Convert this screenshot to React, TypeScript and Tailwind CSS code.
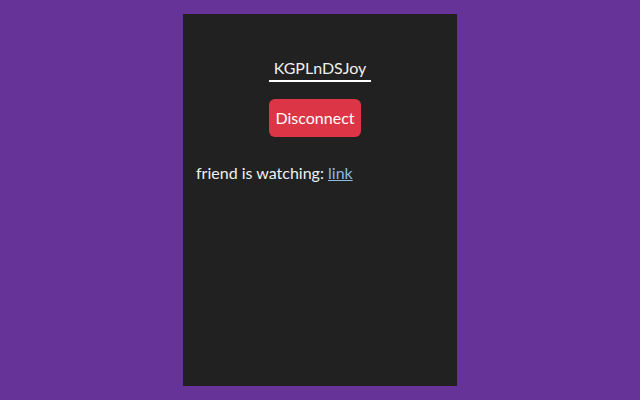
import React from 'react';

const App: React.FC = () => {
  return (
    <div className="w-[640px] h-[400px] bg-[#663399] pt-[14px] font-['Lato',sans-serif] text-[16px]">
      <div className="mx-auto w-[274px] h-[372px] bg-[#212121] px-[13px] pt-[40px] text-[#f0f0f0]">
        <div className="mx-auto w-[102px] flex flex-col items-start">
          <input
            type="text"
            defaultValue="KGPLnDSJoy"
            className="w-[102px] h-[28px] bg-transparent border-0 border-b-2 border-white text-center text-[16px] text-[#f0f0f0] outline-none"
          />
          <button
            type="button"
            className="mt-[17px] w-[92px] h-[38px] rounded-[6px] bg-[#dc3545] text-white text-[16px]"
          >
            Disconnect
          </button>
        </div>
        <p className="mt-[24px] leading-[24px]">
          friend is watching: <a href="#" className="text-[#8fb8de] underline">link</a>
        </p>
      </div>
    </div>
  );
};

export default App;
